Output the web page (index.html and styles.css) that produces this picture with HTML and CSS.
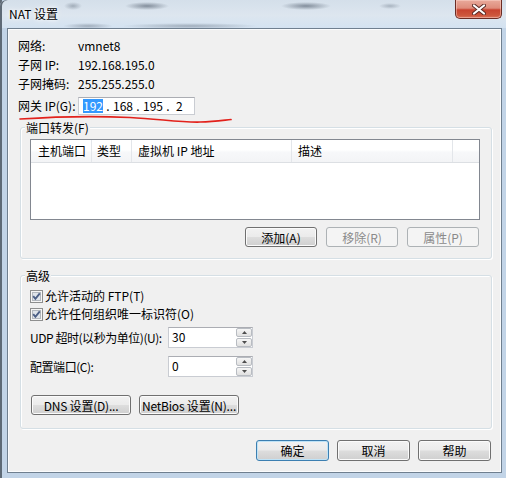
FILE: index.html
```html
<!DOCTYPE html>
<html lang="zh-CN">
<head>
<meta charset="utf-8">
<title>NAT 设置</title>
<link rel="stylesheet" href="styles.css">
</head>
<body>
<div class="window">
  <div class="titlebar">
    <span class="title">NAT 设置</span>
    <button class="close" aria-label="关闭">
      <svg width="14" height="11" viewBox="0 0 14 11"><path d="M2 1.5 L12 9.5 M12 1.5 L2 9.5" stroke="#5a2a24" stroke-width="4" stroke-linecap="round"/><path d="M2 1.5 L12 9.5 M12 1.5 L2 9.5" stroke="#ffffff" stroke-width="2.2" stroke-linecap="round"/></svg>
    </button>
  </div>
  <div class="client">
    <div class="info">
      <span>网络:</span><span>vmnet8</span>
      <span>子网 IP:</span><span>192.168.195.0</span>
      <span>子网掩码:</span><span>255.255.255.0</span>
    </div>
    <div class="gw-row">
      <span class="gw-label">网关 IP(G):</span>
      <div class="ipbox">
        <span class="oct sel">192</span><span class="dot">.</span><span class="oct">168</span><span class="dot">.</span><span class="oct">195</span><span class="dot">.</span><span class="oct last">2</span>
      </div>
    </div>

    <div class="group group-ports">
      <div class="group-title">端口转发(F)</div>
      <div class="listview">
        <div class="lv-header">
          <span class="col c1">主机端口</span>
          <span class="col c2">类型</span>
          <span class="col c3">虚拟机 IP 地址</span>
          <span class="col c4">描述</span>
          <span class="col c5"></span>
        </div>
      </div>
      <div class="btn-row end">
        <button class="btn">添加(A)</button>
        <button class="btn" disabled>移除(R)</button>
        <button class="btn" disabled>属性(P)</button>
      </div>
    </div>

    <div class="group group-adv">
      <div class="group-title">高级</div>
      <label class="check">
        <svg class="cbox" width="13" height="13" viewBox="0 0 13 13"><rect x="0.5" y="0.5" width="12" height="12" fill="#f6f6f6" stroke="#8e8f8f"/><rect x="2.5" y="2.5" width="8" height="8" fill="#dfe4ea" stroke="#b3b8be"/><path d="M3.2 6.2 L5.4 8.8 L9.8 3.4" fill="none" stroke="#4c5f86" stroke-width="1.9"/></svg>
        <span>允许活动的 FTP(T)</span>
      </label>
      <label class="check">
        <svg class="cbox" width="13" height="13" viewBox="0 0 13 13"><rect x="0.5" y="0.5" width="12" height="12" fill="#f6f6f6" stroke="#8e8f8f"/><rect x="2.5" y="2.5" width="8" height="8" fill="#dfe4ea" stroke="#b3b8be"/><path d="M3.2 6.2 L5.4 8.8 L9.8 3.4" fill="none" stroke="#4c5f86" stroke-width="1.9"/></svg>
        <span>允许任何组织唯一标识符(O)</span>
      </label>
      <div class="spin-grid">
        <span class="spin-label">UDP 超时(以秒为单位)(U):</span>
        <div class="spin">
          <span class="spin-val">30</span>
          <span class="spin-btns">
            <span class="sb"><svg width="5" height="3" viewBox="0 0 5 3"><path d="M0 3 L2.5 0 L5 3 Z" fill="#4d4d4d"/></svg></span>
            <span class="sb"><svg width="5" height="3" viewBox="0 0 5 3"><path d="M0 0 L2.5 3 L5 0 Z" fill="#4d4d4d"/></svg></span>
          </span>
        </div>
        <span class="spin-label">配置端口(C):</span>
        <div class="spin">
          <span class="spin-val">0</span>
          <span class="spin-btns">
            <span class="sb"><svg width="5" height="3" viewBox="0 0 5 3"><path d="M0 3 L2.5 0 L5 3 Z" fill="#4d4d4d"/></svg></span>
            <span class="sb"><svg width="5" height="3" viewBox="0 0 5 3"><path d="M0 0 L2.5 3 L5 0 Z" fill="#4d4d4d"/></svg></span>
          </span>
        </div>
      </div>
      <div class="btn-row start">
        <button class="btn wide">DNS 设置(D)...</button>
        <button class="btn wide">NetBios 设置(N)...</button>
      </div>
    </div>

    <div class="btn-row dialog">
      <button class="btn default">确定</button>
      <button class="btn">取消</button>
      <button class="btn">帮助</button>
    </div>
  </div>

  <svg class="annot" width="506" height="478" viewBox="0 0 506 478">
    <path d="M20 119 C50 117 90 115.5 130 117.5 C160 119 180 122.5 200 122 C215 121.5 225 120 231 119.5" fill="none" stroke="#e2211b" stroke-width="1.7" stroke-linecap="round"/>
  </svg>
</div>
</body>
</html>
```

FILE: styles.css
```css
html, body {
  margin: 0;
  padding: 0;
  background: #ffffff;
}

body {
  font-family: "Noto Sans CJK SC", "Noto Sans", sans-serif;
  font-size: 12px;
  color: #000;
}

.window {
  position: relative;
  width: 506px;
  height: 478px;
  display: flex;
  flex-direction: column;
  background: linear-gradient(to right, #5e6a76 0, #5e6a76 2px, #c2d4e7 2px, #c2d4e7 100%);
  overflow: hidden;
}

/* ---------- title bar ---------- */
.titlebar {
  height: 28px;
  flex: none;
  display: flex;
  align-items: flex-start;
  border-top-left-radius: 6px;
  box-shadow: inset 2px 0 0 #5e6a76;
  background:
    radial-gradient(ellipse 9px 4px at 73px 6px, rgba(60, 72, 88, .35), transparent),
    radial-gradient(ellipse 22px 4px at 147px 6px, rgba(60, 72, 88, .55), transparent),
    radial-gradient(ellipse 25px 4px at 306px 6px, rgba(60, 72, 88, .55), transparent),
    radial-gradient(ellipse 11px 3px at 390px 6px, rgba(60, 72, 88, .3), transparent),
    radial-gradient(ellipse 25px 3px at 88px 26px, rgba(60, 72, 88, .35), transparent),
    radial-gradient(ellipse 68px 3px at 190px 26px, rgba(60, 72, 88, .35), transparent),
    linear-gradient(#d4dfea 0%, #dde6ef 55%, #d3e2f1 100%);
}

.title {
  padding-left: 9px;
  line-height: 27px;
  font-size: 12px;
  color: #000;
  text-shadow: 0 0 6px #fff, 0 0 3px #fff;
}

.close {
  margin-left: auto;
  margin-right: 4px;
  width: 47px;
  height: 19px;
  padding: 0;
  border: 1px solid #6b2c24;
  border-top: none;
  border-radius: 0 0 5px 5px;
  background: linear-gradient(#e9aa9b 0%, #de8c7b 45%, #c8432f 55%, #cd563c 85%, #d9745c 100%);
  box-shadow: inset 0 0 0 1px rgba(255, 220, 210, .45);
  display: flex;
  align-items: center;
  justify-content: center;
}

/* ---------- client area ---------- */
.client {
  flex: 1;
  margin: 0 4px 5px 7px;
  border: 1px solid #6f7f8f;
  box-shadow: inset 0 0 0 1px #fbfcfd;
  background: #f0f0f0;
  display: flex;
  flex-direction: column;
}

.info {
  margin-top: 7px;
  padding-left: 10px;
  display: grid;
  grid-template-columns: 60px auto;
  line-height: 19px;
}

.gw-row {
  margin-top: 4px;
  padding-left: 10px;
  display: flex;
  align-items: center;
  height: 18px;
}

.gw-label {
  width: 60px;
  line-height: 18px;
}

.ipbox {
  box-sizing: border-box;
  width: 117px;
  height: 18px;
  background: #fff;
  border: 1px solid #c9ccd2;
  border-top-color: #abadb3;
  padding-left: 4px;
  display: flex;
  align-items: center;
}

.oct {
  width: 20px;
  text-align: center;
  line-height: 14px;
}

.oct.sel {
  background: #3399ff;
  color: #fff;
}

.oct.last {
  text-align: left;
  padding-left: 3px;
  box-sizing: border-box;
}

.dot {
  width: 10px;
  text-align: center;
  line-height: 14px;
}

/* ---------- group boxes ---------- */
.group {
  margin: 0 9px 0 12px;
  border: 1px solid #d5dfe5;
  border-radius: 3px;
  box-shadow: inset 1px 1px 0 #fff, 1px 1px 0 #fff;
  display: flex;
  flex-direction: column;
}

.group-ports {
  margin-top: 12px;
  padding-bottom: 11px;
}

.group-adv {
  margin-top: 16px;
  padding-bottom: 13px;
}

.group-title {
  margin: -8px 0 0 4px;
  padding: 0 1px;
  width: fit-content;
  line-height: 16px;
  background: #f0f0f0;
}

/* ---------- list view ---------- */
.listview {
  margin: 3px 11px 0 9px;
  height: 81px;
  box-sizing: border-box;
  border: 1px solid #828790;
  background: #fff;
}

.lv-header {
  display: flex;
  height: 23px;
  box-sizing: border-box;
  border-bottom: 1px solid #dcdfe3;
  background: linear-gradient(#ffffff 0%, #ffffff 45%, #f7f8fa 55%, #f3f4f6 100%);
}

.col {
  box-sizing: border-box;
  padding-left: 6px;
  line-height: 22px;
  border-right: 1px solid #e3e6ea;
  white-space: nowrap;
}

.c1 { width: 61px; padding-left: 7px; }
.c2 { width: 40px; padding-left: 5px; }
.c3 { width: 160px; }
.c4 { width: 161px; }
.c5 { flex: 1; border-right: none; }

/* ---------- buttons ---------- */
.btn-row {
  display: flex;
}

.btn-row.end {
  justify-content: flex-end;
  gap: 9px;
  margin: 7px 12px 0 0;
}

.btn-row.start {
  gap: 8px;
  margin: 18px 0 0 10px;
}

.btn-row.dialog {
  justify-content: flex-end;
  gap: 8px;
  margin: 11px 10px 0 0;
}

.btn {
  font: inherit;
  font-size: 12px;
  color: #000;
  width: 72px;
  height: 20px;
  padding: 0;
  line-height: 17px;
  border: 1px solid #707070;
  border-radius: 3px;
  background: linear-gradient(#f2f2f2 0%, #ebebeb 48%, #dddddd 52%, #cfcfcf 100%);
  box-shadow: inset 0 0 0 1px #fbfbfb;
  white-space: nowrap;
}

.btn:disabled {
  color: #8a8a8a;
  border-color: #adb2b5;
  background: #f4f4f4;
  box-shadow: none;
}

.btn.wide {
  width: 100px;
  letter-spacing: -0.2px;
}

.btn-row.dialog .btn {
  width: 73px;
  height: 21px;
  line-height: 18px;
}

.btn.default {
  border-color: #3c7fb1;
  box-shadow: inset 0 0 0 1px #bfe3f7;
}

/* ---------- checkboxes ---------- */
.check {
  display: flex;
  align-items: center;
  padding-left: 9px;
  line-height: 18px;
}

.check:first-of-type {
  margin-top: 3px;
}

.cbox {
  flex: none;
  margin-right: 2px;
}

/* ---------- spin boxes ---------- */
.spin-grid {
  margin-top: 4px;
  padding-left: 9px;
  display: grid;
  grid-template-columns: 138px 85px;
  grid-auto-rows: 21px;
  row-gap: 8px;
  align-items: center;
}

.spin-label {
  white-space: nowrap;
  letter-spacing: -0.45px;
}

.spin {
  box-sizing: border-box;
  height: 21px;
  border: 1px solid #c9ccd2;
  border-top-color: #abadb3;
  background: #fff;
  display: flex;
}

.spin-val {
  flex: 1;
  padding-left: 3px;
  line-height: 18px;
}

.spin-btns {
  width: 16px;
  display: flex;
  flex-direction: column;
  gap: 1px;
}

.sb {
  flex: 1;
  box-sizing: border-box;
  border: 1px solid #b8bcc2;
  border-radius: 2px;
  background: linear-gradient(#f6f6f6, #e0e0e0);
  display: flex;
  align-items: center;
  justify-content: center;
}

/* ---------- annotation overlay ---------- */
.annot {
  position: absolute;
  left: 0;
  top: 0;
  pointer-events: none;
}
```
